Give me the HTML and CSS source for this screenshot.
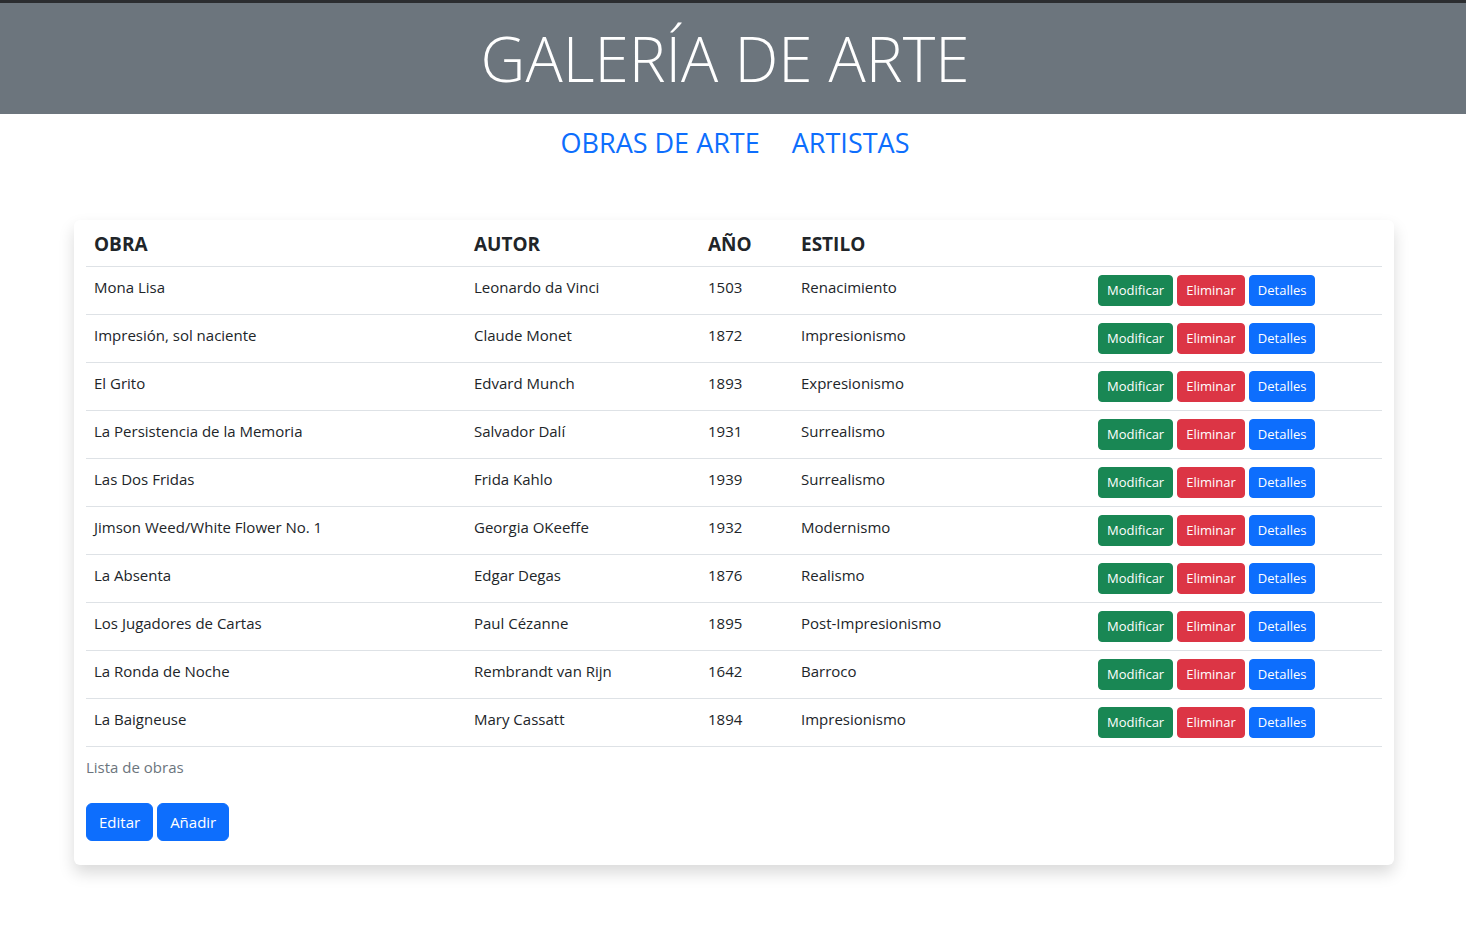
FILE: index.html
```html
<!DOCTYPE html>
<html lang="es">
<head>
<meta charset="utf-8">
<title>Galería de Arte</title>
<link rel="stylesheet" href="styles.css">
</head>
<body>
<header class="banner">
  <h1 class="banner-title">GALERÍA DE ARTE</h1>
</header>
<nav class="main-nav">
  <a class="nav-link" href="#">OBRAS DE ARTE</a>
  <a class="nav-link" href="#">ARTISTAS</a>
</nav>
<main class="content">
  <section class="card">
    <table class="works">
      <caption>Lista de obras</caption>
      <colgroup>
        <col class="c-obra"><col class="c-autor"><col class="c-anio"><col class="c-estilo"><col class="c-acc">
      </colgroup>
      <thead>
        <tr><th>OBRA</th><th>AUTOR</th><th>AÑO</th><th>ESTILO</th><th></th></tr>
      </thead>
      <tbody>
        <tr><td>Mona Lisa</td><td>Leonardo da Vinci</td><td>1503</td><td>Renacimiento</td><td><div class="actions"><button class="btn btn-sm btn-success">Modificar</button><button class="btn btn-sm btn-danger">Eliminar</button><button class="btn btn-sm btn-primary">Detalles</button></div></td></tr>
        <tr><td>Impresión, sol naciente</td><td>Claude Monet</td><td>1872</td><td>Impresionismo</td><td><div class="actions"><button class="btn btn-sm btn-success">Modificar</button><button class="btn btn-sm btn-danger">Eliminar</button><button class="btn btn-sm btn-primary">Detalles</button></div></td></tr>
        <tr><td>El Grito</td><td>Edvard Munch</td><td>1893</td><td>Expresionismo</td><td><div class="actions"><button class="btn btn-sm btn-success">Modificar</button><button class="btn btn-sm btn-danger">Eliminar</button><button class="btn btn-sm btn-primary">Detalles</button></div></td></tr>
        <tr><td>La Persistencia de la Memoria</td><td>Salvador Dalí</td><td>1931</td><td>Surrealismo</td><td><div class="actions"><button class="btn btn-sm btn-success">Modificar</button><button class="btn btn-sm btn-danger">Eliminar</button><button class="btn btn-sm btn-primary">Detalles</button></div></td></tr>
        <tr><td>Las Dos Fridas</td><td>Frida Kahlo</td><td>1939</td><td>Surrealismo</td><td><div class="actions"><button class="btn btn-sm btn-success">Modificar</button><button class="btn btn-sm btn-danger">Eliminar</button><button class="btn btn-sm btn-primary">Detalles</button></div></td></tr>
        <tr><td>Jimson Weed/White Flower No. 1</td><td>Georgia OKeeffe</td><td>1932</td><td>Modernismo</td><td><div class="actions"><button class="btn btn-sm btn-success">Modificar</button><button class="btn btn-sm btn-danger">Eliminar</button><button class="btn btn-sm btn-primary">Detalles</button></div></td></tr>
        <tr><td>La Absenta</td><td>Edgar Degas</td><td>1876</td><td>Realismo</td><td><div class="actions"><button class="btn btn-sm btn-success">Modificar</button><button class="btn btn-sm btn-danger">Eliminar</button><button class="btn btn-sm btn-primary">Detalles</button></div></td></tr>
        <tr><td>Los Jugadores de Cartas</td><td>Paul Cézanne</td><td>1895</td><td>Post-Impresionismo</td><td><div class="actions"><button class="btn btn-sm btn-success">Modificar</button><button class="btn btn-sm btn-danger">Eliminar</button><button class="btn btn-sm btn-primary">Detalles</button></div></td></tr>
        <tr><td>La Ronda de Noche</td><td>Rembrandt van Rijn</td><td>1642</td><td>Barroco</td><td><div class="actions"><button class="btn btn-sm btn-success">Modificar</button><button class="btn btn-sm btn-danger">Eliminar</button><button class="btn btn-sm btn-primary">Detalles</button></div></td></tr>
        <tr><td>La Baigneuse</td><td>Mary Cassatt</td><td>1894</td><td>Impresionismo</td><td><div class="actions"><button class="btn btn-sm btn-success">Modificar</button><button class="btn btn-sm btn-danger">Eliminar</button><button class="btn btn-sm btn-primary">Detalles</button></div></td></tr>
      </tbody>
    </table>
    <div class="card-actions">
      <button class="btn btn-primary">Editar</button>
      <button class="btn btn-primary">Añadir</button>
    </div>
  </section>
</main>
</body>
</html>
```
FILE: styles.css
```css
* { box-sizing: border-box; }
html, body { margin: 0; padding: 0; }
body {
  font-family: "Open Sans", "Noto Sans", "Liberation Sans", sans-serif;
  font-size: 16px;
  line-height: 1.5;
  color: #212529;
  background: #fff;
  border-top: 3px solid #2b2d30;
}
.banner {
  background: #6c757d;
  height: 111px;
  display: flex;
  align-items: center;
  justify-content: center;
}
.banner-title {
  margin: 0;
  color: #fff;
  font-weight: 300;
  font-size: 62px;
  line-height: 1.2;
  letter-spacing: 0;
  padding-right: 16px;
}
.main-nav {
  display: flex;
  justify-content: center;
  padding-top: 10px;
  padding-left: 4px;
  height: 106px;
}
.nav-link {
  color: #0d6efd;
  text-decoration: none;
  font-size: 27px;
  line-height: 1.2;
  padding: 3px 16px 3px;
}
.content {
  padding: 0 72px 84px 74px;
}
.card {
  background: #fff;
  border-radius: 6px;
  box-shadow: 0 8px 16px rgba(0, 0, 0, 0.15);
  padding: 12px 12px 24px;
}
.works {
  width: 100%;
  border-collapse: collapse;
  caption-side: bottom;
  table-layout: fixed;
  margin-bottom: 16px;
}
.works caption {
  text-align: left;
  color: #6c757d;
  padding: 9px 0 8px;
  font-size: 15px;
}
.c-obra { width: 380px; }
.c-autor { width: 234px; }
.c-anio { width: 93px; }
.c-estilo { width: 297px; }
.works th {
  text-align: left;
  font-size: 19px;
  font-weight: 700;
  line-height: 24px;
  padding: 0 8px 10px;
  border-bottom: 1px solid #dee2e6;
}
.works td {
  font-size: 15px;
  vertical-align: top;
  padding: 8px;
  line-height: 24px;
  border-bottom: 1px solid #dee2e6;
}
.actions {
  display: flex;
  gap: 4px;
}
.btn {
  font-family: inherit;
  border: 1px solid transparent;
  color: #fff;
  cursor: pointer;
  font-size: 15px;
  line-height: 24px;
  padding: 6px 12px;
  border-radius: 6px;
}
.btn-sm {
  font-size: 13px;
  line-height: 21px;
  padding: 4px 8px;
  border-radius: 4px;
}
.btn-success { background: #198754; border-color: #198754; }
.btn-danger { background: #dc3545; border-color: #dc3545; }
.btn-primary { background: #0d6efd; border-color: #0d6efd; }
.card-actions {
  display: flex;
  gap: 4px;
}
```
